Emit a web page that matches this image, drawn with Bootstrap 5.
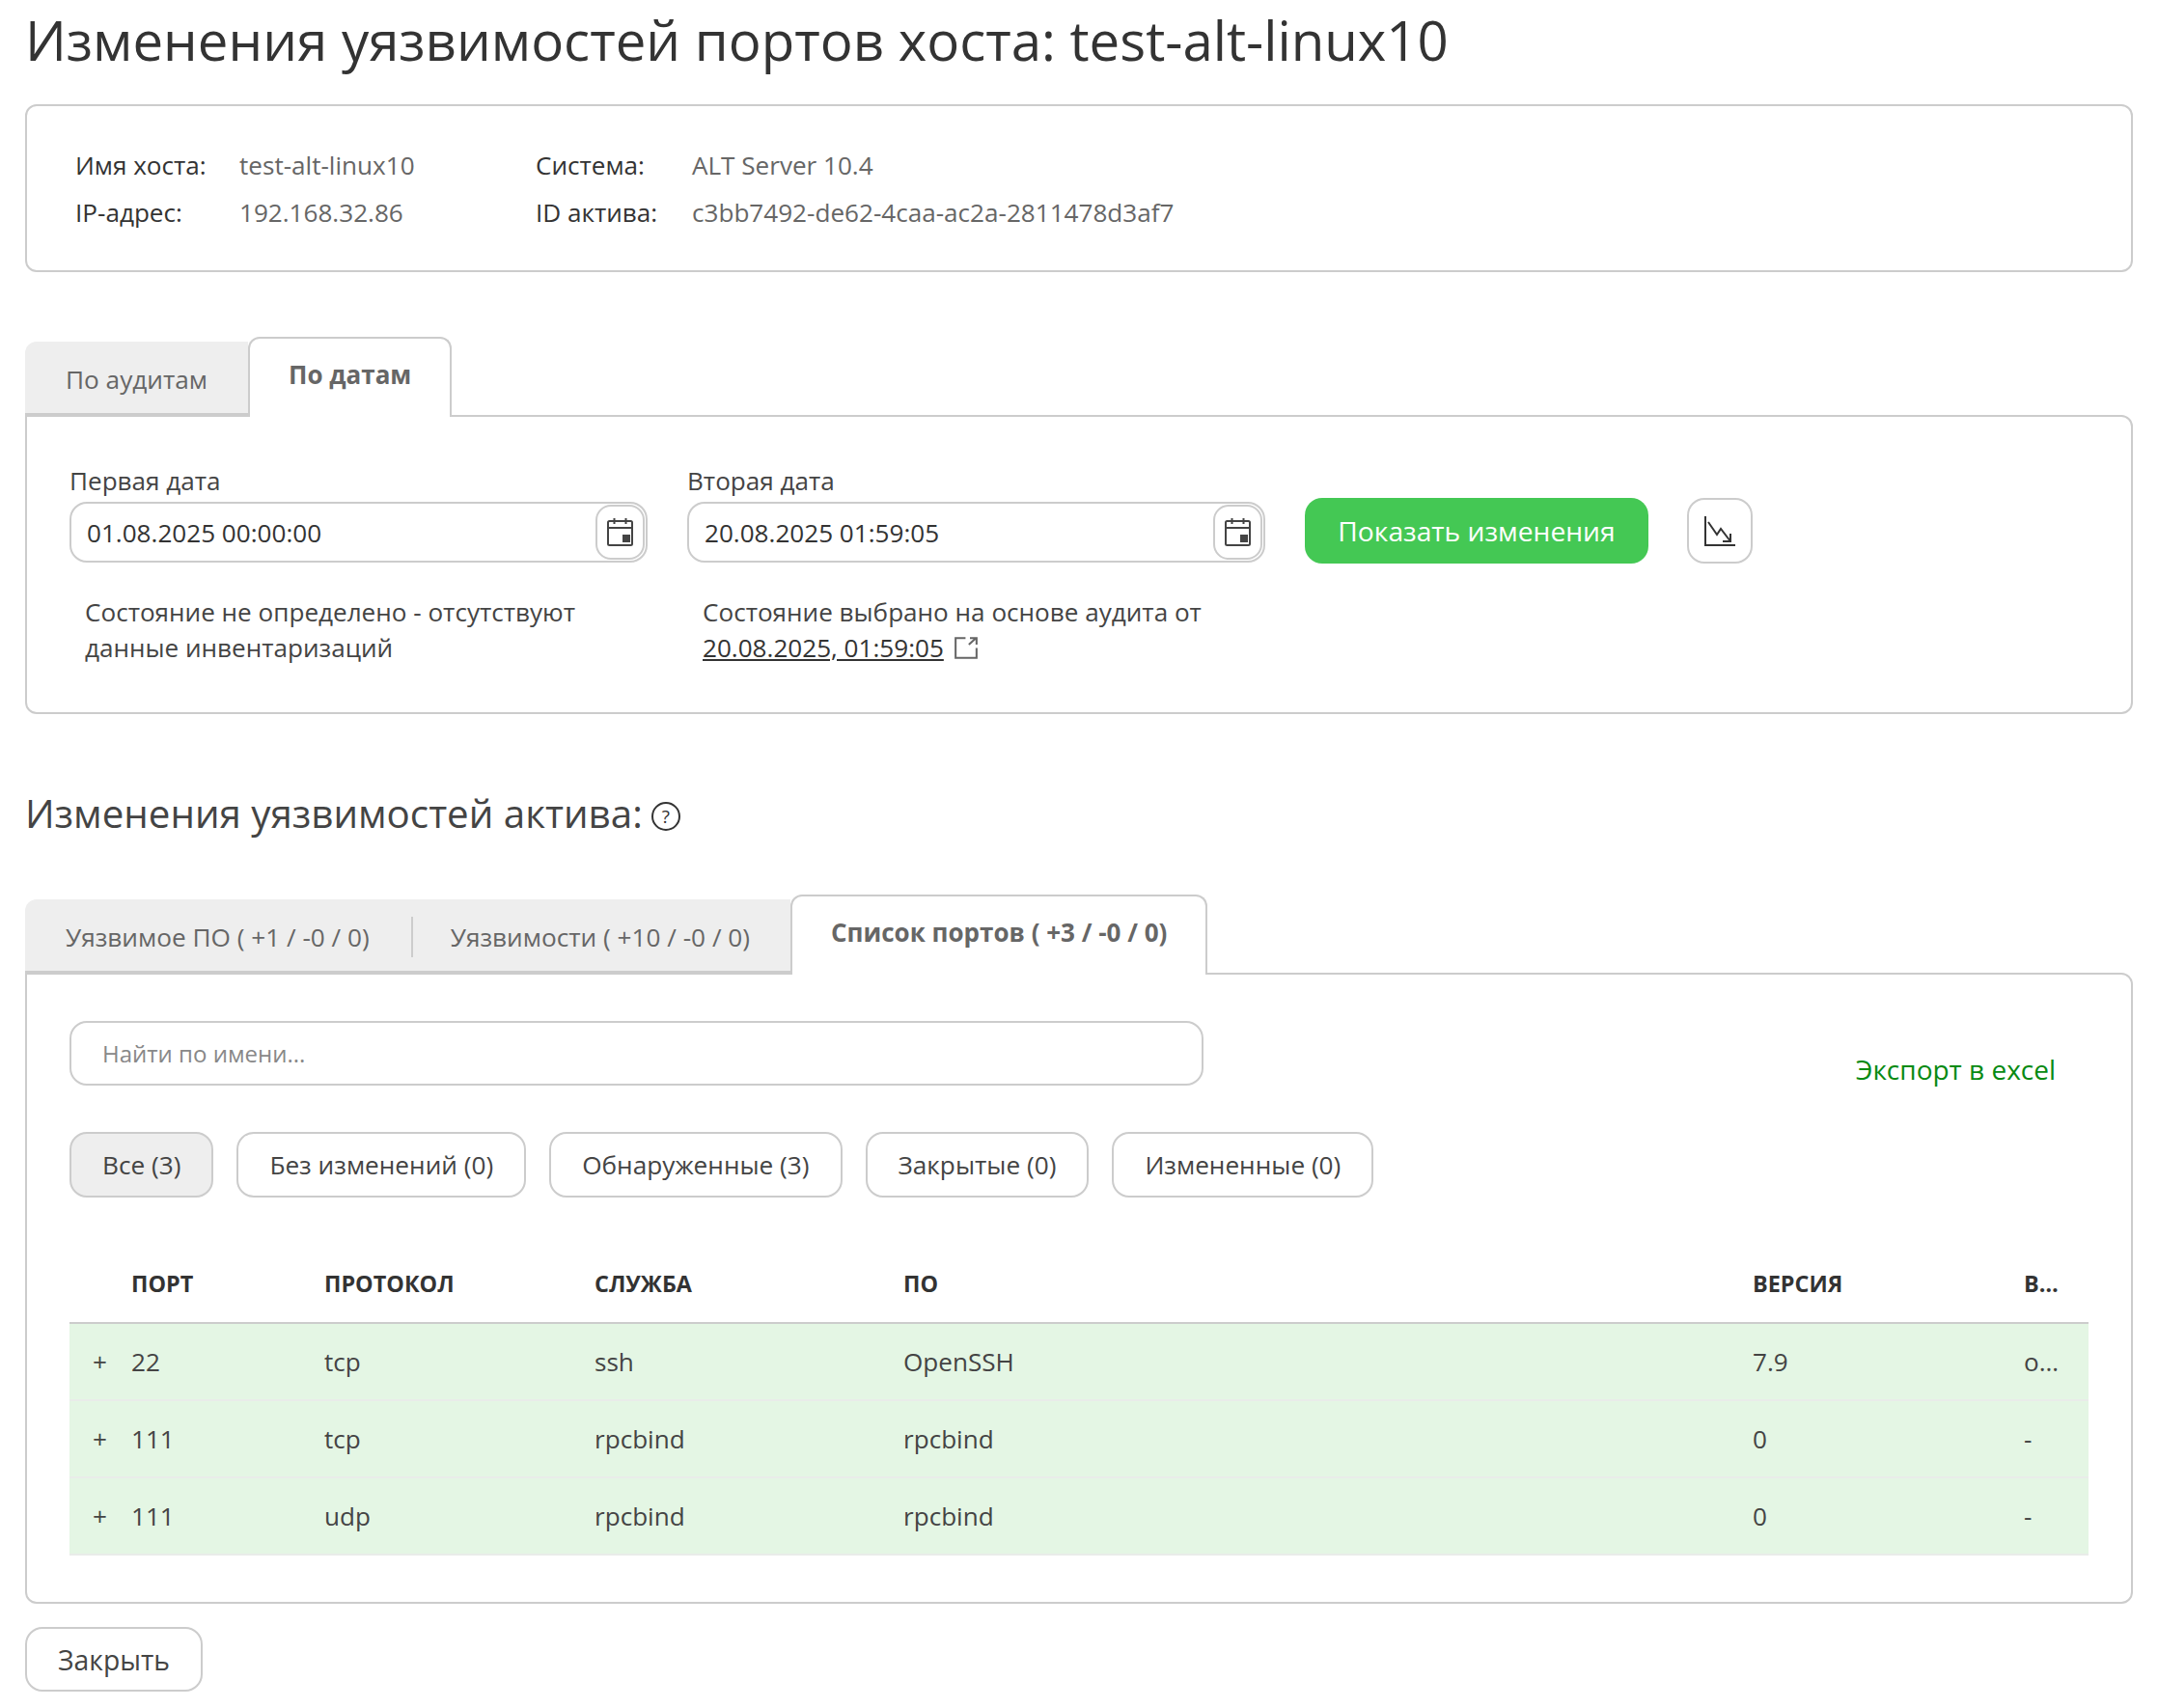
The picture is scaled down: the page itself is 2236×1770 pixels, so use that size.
<!DOCTYPE html>
<html lang="ru">
<head>
  <meta charset="UTF-8">
  <meta name="viewport" content="width=device-width, initial-scale=1.0">
  <title>Изменения уязвимостей портов хоста</title>
  <link href="https://cdn.jsdelivr.net/npm/bootstrap@5.3.3/dist/css/bootstrap.min.css" rel="stylesheet">
  <style>
    body { font-family: "Open Sans", "Noto Sans", sans-serif; font-size: 26.1px; color: #333; background: #fff; }
    .page-wrap { padding: 0 26px; }
    .page-title { font-size: 56.4px; font-weight: 400; line-height: 84px; margin: 0 0 24px; color: #333; white-space: nowrap; }
    .host-box { border: 2px solid #ccc; border-radius: 12px; padding: 37px 50px 35px; display: grid; grid-template-columns: 170px 307px 162px 1fr; line-height: 49px; }
    .host-val { color: #666; }
    .tab-strip { flex-wrap: nowrap; border-bottom: 0; height: 81px; align-items: flex-end; margin-top: 0; }
    .tab-strip.first-tabs { margin-top: 67px; }
    .tab-strip .nav-link { margin: 0; border: 0; height: 76px; padding: 0 42px; line-height: 78px; background: #eee; color: #666; border-radius: 0; font-size: 26.2px; border-bottom: 2px solid #ccc; position: relative; }
    .tab-strip .nav-item:first-child .nav-link { border-top-left-radius: 12px; }
    .tab-strip .nav-link.active { height: 83px; margin-bottom: -2px; padding: 0 40px; position: relative; z-index: 1; line-height: 74px; background: #fff; font-size: 26px; font-weight: 700; color: #666; border: 2px solid #ccc; border-bottom: 0; border-radius: 12px 12px 0 0; }
    .tab-sep { position: relative; z-index: 1; }
    .tab-sep .nav-link::after { content: ""; position: absolute; right: -3px; top: 18px; height: 42px; width: 2px; background: #ccc; }
    .tab-panel { border: 2px solid #ccc; border-radius: 0 12px 12px 12px; border-top-left-radius: 0; }
    .date-panel { padding: 48px 44px 48px; }
    .date-col { width: 599px; }
    .date-row { column-gap: 41px; }
    .field-label { line-height: 37px; margin-bottom: 3px; color: #444; }
    .date-field { height: 63px; border: 2px solid #ccc; border-radius: 18px; padding: 1px; }
    .date-field .form-control { border: 0; box-shadow: none; background: transparent; font-size: 26.1px; color: #333; padding: 0 0 0 15px; height: 100%; }
    .cal-btn { width: 51px; flex: none; padding: 0; border: 2px solid #ccc; border-radius: 16px; background: #fff; display: flex; align-items: center; justify-content: center; }
    .show-btn { width: 356px; height: 68px; margin-top: 36px; background: #44c854; border: 0; border-radius: 18px; color: #fff; font-size: 28.2px; padding: 0; }
    .chart-btn { width: 68px; height: 68px; margin-top: 36px; margin-left: -1px; border: 2px solid #ccc; border-radius: 18px; background: #fff; padding: 0; display: flex; align-items: center; justify-content: center; }
    .state-note { margin-top: 33px; padding-left: 16px; line-height: 37px; color: #444; white-space: nowrap; }
    .state-note a { color: #333; }
    .state-note svg { margin-left: 11px; vertical-align: -2px; }
    .sub-title { font-size: 40.3px; font-weight: 400; line-height: 60px; margin: 73px 0 54px; color: #444; display: flex; align-items: center; }
    .help-mark { width: 30px; height: 30px; margin: 6px 0 0 9px; border: 2px solid #333; border-radius: 50%; font-size: 19px; line-height: 26px; text-align: center; color: #333; }
    .ports-panel { padding: 48px 44px 48px; }
    .search-row { height: 67px; }
    .search-box { width: 1175px; height: 67px; border: 2px solid #ccc; border-radius: 18px; font-size: 24px; padding: 0 32px; box-shadow: none; }
    .search-box::placeholder { color: #888; }
    .export-link { color: #078a12; text-decoration: none; margin: 32px 34px 0 0; line-height: 36px; font-size: 28px; }
    .filter-row { margin-top: 48px; column-gap: 24px; }
    .filter-btn { height: 68px; border: 2px solid #ccc; border-radius: 18px; background: #fff; color: #444; font-size: 26.2px; padding: 2px 32px 0; }
    .filter-btn.picked { background: #eee; }
    .port-table { margin: 48px 0 0; table-layout: fixed; width: 100%; font-size: 26.1px; color: #444; }
    .port-table th { height: 82px; vertical-align: middle; padding: 2px 12px 0; border-bottom: 2px solid #ccc; font-size: 23.4px; font-weight: 700; text-transform: uppercase; color: #333; background: #fff; box-shadow: none; }
    .port-table td { height: 80px; vertical-align: middle; padding: 2px 12px 0; background: #e4f6e4; border-bottom: 2px solid #e9ece9; color: #444; box-shadow: none; }
    .port-table td:first-child { padding-left: 24px; padding-right: 0; }
    .close-btn { display: block; width: 184px; height: 67px; margin-top: 24px; border: 2px solid #ccc; border-radius: 18px; background: #fff; color: #444; font-size: 28.3px; padding: 2px 0 0; }
  </style>
</head>
<body>
<div class="page-wrap">
  <h1 class="page-title">Изменения уязвимостей портов хоста: test-alt-linux10</h1>

  <div class="host-box">
    <div>Имя хоста:</div><div class="host-val">test-alt-linux10</div>
    <div>Система:</div><div class="host-val">ALT Server 10.4</div>
    <div>IP-адрес:</div><div class="host-val">192.168.32.86</div>
    <div>ID актива:</div><div class="host-val">c3bb7492-de62-4caa-ac2a-2811478d3af7</div>
  </div>

  <ul class="nav nav-tabs tab-strip first-tabs">
    <li class="nav-item"><a class="nav-link" href="#">По аудитам</a></li>
    <li class="nav-item"><a class="nav-link active" href="#">По датам</a></li>
  </ul>
  <div class="tab-panel date-panel">
    <div class="d-flex date-row">
      <div class="date-col">
        <div class="field-label">Первая дата</div>
        <div class="date-field d-flex">
          <input class="form-control" type="text" value="01.08.2025 00:00:00">
          <button class="cal-btn" type="button">
            <svg width="27" height="29" viewBox="0 0 27 29" fill="none" stroke="#444" stroke-width="2"><rect x="1" y="3" width="25" height="25" rx="1.5"/><path d="M1 10H26M7.500 0V6M19.500 0V6"/><rect x="16" y="17" width="8" height="8" fill="#444" stroke="none"/></svg>
          </button>
        </div>
        <div class="state-note">Состояние не определено - отсутствуют<br>данные инвентаризаций</div>
      </div>
      <div class="date-col">
        <div class="field-label">Вторая дата</div>
        <div class="date-field d-flex">
          <input class="form-control" type="text" value="20.08.2025 01:59:05">
          <button class="cal-btn" type="button">
            <svg width="27" height="29" viewBox="0 0 27 29" fill="none" stroke="#444" stroke-width="2"><rect x="1" y="3" width="25" height="25" rx="1.5"/><path d="M1 10H26M7.500 0V6M19.500 0V6"/><rect x="16" y="17" width="8" height="8" fill="#444" stroke="none"/></svg>
          </button>
        </div>
        <div class="state-note">Состояние выбрано на основе аудита от<br><a href="#">20.08.2025, 01:59:05</a><svg width="24" height="23" viewBox="0 0 21 20" fill="none" stroke="#666" stroke-width="1.800"><path d="M10 1H1V19H20V10M13 7L19.500 1M14 1H20V7"/></svg></div>
      </div>
      <button class="show-btn flex-none" type="button">Показать изменения</button>
      <button class="chart-btn" type="button">
        <svg width="32" height="31" viewBox="0 0 32 31" fill="none" stroke="#333"><path d="M1 0V30H32" stroke-width="2"/><path d="M4 6L13 19L17 13L27 26M27 18V26H19" stroke-width="2"/></svg>
      </button>
    </div>
  </div>

  <h2 class="sub-title">Изменения уязвимостей актива:<span class="help-mark">?</span></h2>

  <ul class="nav nav-tabs tab-strip">
    <li class="nav-item tab-sep"><a class="nav-link" href="#">Уязвимое ПО ( +1 / -0 / 0)</a></li>
    <li class="nav-item"><a class="nav-link" href="#">Уязвимости ( +10 / -0 / 0)</a></li>
    <li class="nav-item"><a class="nav-link active" href="#">Список портов ( +3 / -0 / 0)</a></li>
  </ul>
  <div class="tab-panel ports-panel">
    <div class="d-flex justify-content-between search-row">
      <input class="form-control search-box" type="text" placeholder="Найти по имени...">
      <a class="export-link" href="#">Экспорт в excel</a>
    </div>
    <div class="d-flex filter-row">
      <button class="filter-btn picked" type="button">Все (3)</button>
      <button class="filter-btn" type="button">Без изменений (0)</button>
      <button class="filter-btn" type="button">Обнаруженные (3)</button>
      <button class="filter-btn" type="button">Закрытые (0)</button>
      <button class="filter-btn" type="button">Измененные (0)</button>
    </div>
    <table class="table port-table">
      <colgroup><col style="width:52px"><col style="width:200px"><col style="width:280px"><col style="width:320px"><col style="width:880px"><col style="width:281px"><col></colgroup>
      <thead>
        <tr><th></th><th>Порт</th><th>Протокол</th><th>Служба</th><th>ПО</th><th>Версия</th><th>В…</th></tr>
      </thead>
      <tbody>
        <tr><td>+</td><td>22</td><td>tcp</td><td>ssh</td><td>OpenSSH</td><td>7.9</td><td>о…</td></tr>
        <tr><td>+</td><td>111</td><td>tcp</td><td>rpcbind</td><td>rpcbind</td><td>0</td><td>-</td></tr>
        <tr><td>+</td><td>111</td><td>udp</td><td>rpcbind</td><td>rpcbind</td><td>0</td><td>-</td></tr>
      </tbody>
    </table>
  </div>
  <button class="close-btn" type="button">Закрыть</button>
</div>
<script src="https://cdn.jsdelivr.net/npm/bootstrap@5.3.3/dist/js/bootstrap.bundle.min.js"></script>
</body>
</html>
